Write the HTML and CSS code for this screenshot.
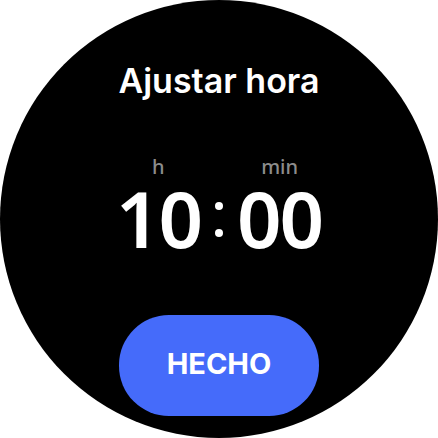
FILE: index.html
```html
<!DOCTYPE html>
<html lang="es">
<head>
<meta charset="utf-8">
<link rel="stylesheet" href="styles.css">
</head>
<body>
<div class="watch">
  <h1 class="title">Ajustar hora</h1>
  <div class="picker">
    <div class="col">
      <span class="label">h</span>
      <span class="value">10</span>
    </div>
    <div class="colon"><span class="dot"></span><span class="dot"></span></div>
    <div class="col">
      <span class="label">min</span>
      <span class="value">00</span>
    </div>
  </div>
  <button class="done">HECHO</button>
</div>
</body>
</html>
```
FILE: styles.css
```css
html, body {
  margin: 0;
  padding: 0;
  background: #fff;
}
.watch {
  width: 438px;
  height: 438px;
  border-radius: 50%;
  background: #000;
  display: flex;
  flex-direction: column;
  align-items: center;
  overflow: hidden;
  font-family: Inter, "Noto Sans", sans-serif;
  color: #fff;
}
.title {
  margin: 61px 0 0;
  font-family: Inter, sans-serif;
  font-weight: 600;
  font-size: 34px;
  line-height: 40px;
  letter-spacing: 0;
}
.picker {
  margin-top: 54px;
  display: flex;
  align-items: flex-start;
  gap: 14px;
}
.col {
  display: flex;
  flex-direction: column;
  align-items: center;
}
.label {
  font-family: "Noto Sans", sans-serif;
  font-size: 20px;
  line-height: 24px;
  color: #8c8c8c;
  font-weight: 500;
}
.value {
  margin-top: 9px;
  font-family: "Noto Sans", sans-serif;
  font-size: 78px;
  line-height: 60px;
  font-weight: 650;
  letter-spacing: -2px;
}
.colon {
  display: flex;
  flex-direction: column;
  gap: 19px;
  margin-top: 47px;
}
.dot {
  width: 8px;
  height: 8px;
  border-radius: 50%;
  background: #fff;
}
.done {
  margin-top: auto;
  margin-bottom: 22px;
  width: 200px;
  height: 101px;
  border: none;
  border-radius: 50px;
  background: #456bfa;
  color: #fff;
  font-family: Inter, sans-serif;
  font-weight: 700;
  font-size: 29px;
  padding: 0 0 4px;
}
```
